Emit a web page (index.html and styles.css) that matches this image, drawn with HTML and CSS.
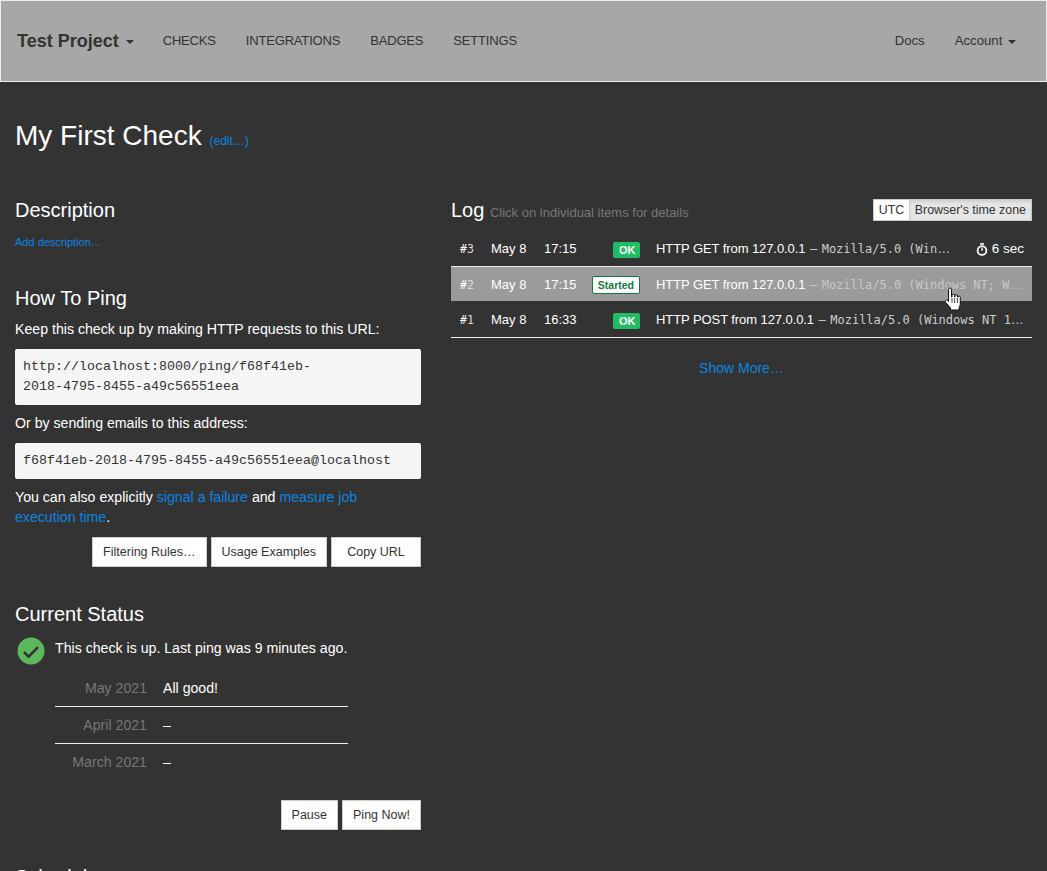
FILE: index.html
```html
<!DOCTYPE html>
<html lang="en">
<head>
<meta charset="utf-8">
<title>My First Check</title>
<link rel="stylesheet" href="styles.css">
</head>
<body>
<nav class="navbar">
  <a class="brand">Test Project <span class="caret"></span></a>
  <ul class="nav-links">
    <li>CHECKS</li>
    <li>INTEGRATIONS</li>
    <li>BADGES</li>
    <li>SETTINGS</li>
  </ul>
  <ul class="nav-links nav-right">
    <li class="plain">Docs</li>
    <li class="plain">Account <span class="caret small"></span></li>
  </ul>
</nav>

<main class="container">
  <h1 class="title">My First Check <small class="edit">(edit…)</small></h1>
  <div class="columns">
    <section class="left">
      <h2 class="first">Description</h2>
      <a class="add-desc">Add description…</a>

      <h2 class="ping-head">How To Ping</h2>
      <p>Keep this check up by making HTTP requests to this URL:</p>
      <pre class="code">http://localhost:8000/ping/f68f41eb-
2018-4795-8455-a49c56551eea</pre>
      <p>Or by sending emails to this address:</p>
      <pre class="code">f68f41eb-2018-4795-8455-a49c56551eea@localhost</pre>
      <p class="explicit">You can also explicitly <a>signal a failure</a> and <a>measure job execution time</a>.</p>
      <div class="buttons">
        <button class="btn">Filtering Rules…</button>
        <button class="btn">Usage Examples</button>
        <button class="btn wide">Copy URL</button>
      </div>

      <h2 class="status-head">Current Status</h2>
      <div class="status">
        <svg class="status-icon" width="28" height="28" viewBox="0 0 28 28" aria-hidden="true">
          <circle cx="14" cy="14" r="13.5" fill="#5cb85c"/>
          <path d="M7 15l4.6 4.6L21 10.2" fill="none" stroke="#333" stroke-width="2.6"/>
        </svg>
        <div class="status-body">
          <p class="status-text">This check is up. Last ping was 9 minutes ago.</p>
          <table class="months">
            <tr><th>May 2021</th><td>All good!</td></tr>
            <tr><th>April 2021</th><td>–</td></tr>
            <tr><th>March 2021</th><td>–</td></tr>
          </table>
        </div>
      </div>
      <div class="buttons actions">
        <button class="btn">Pause</button>
        <button class="btn">Ping Now!</button>
      </div>
      <h2 class="schedule-head">Schedule</h2>
    </section>

    <section class="right">
      <div class="log-head">
        <h2 class="first">Log <small class="hint">Click on individual items for details</small></h2>
        <div class="tz">
          <span class="tz-btn active">UTC</span><span class="tz-btn">Browser's time zone</span>
        </div>
      </div>
      <table class="log">
        <tr>
          <td class="n"><span>#</span>3</td><td class="date">May 8</td><td class="time">17:15</td>
          <td class="badge-cell"><span class="badge ok">OK</span></td>
          <td class="detail">
            <div class="detail-row">
              <div class="ev">HTTP GET from 127.0.0.1 <span class="dash">–</span> <code>Mozilla/5.0 (Win</code><span class="dots">…</span></div>
              <div class="dur">
                <svg width="12" height="13" viewBox="0 0 12 13" aria-hidden="true"><path d="M4 1h4" stroke="#fff" stroke-width="1.6"/><circle cx="6" cy="7.5" r="4.4" fill="none" stroke="#fff" stroke-width="1.7"/><path d="M6 4.6v3.2" stroke="#fff" stroke-width="1.3"/></svg>
                <span class="dur-text">6 sec</span>
              </div>
            </div>
          </td>
        </tr>
        <tr class="hover">
          <td class="n"><span>#</span>2</td><td class="date">May 8</td><td class="time">17:15</td>
          <td class="badge-cell"><span class="badge started">Started</span></td>
          <td class="detail"><div class="ev">HTTP GET from 127.0.0.1 <span class="dash">–</span> <code>Mozilla/5.0 (Windows NT; W</code><span class="dots">…</span></div></td>
        </tr>
        <tr class="last">
          <td class="n"><span>#</span>1</td><td class="date">May 8</td><td class="time">16:33</td>
          <td class="badge-cell"><span class="badge ok">OK</span></td>
          <td class="detail"><div class="ev">HTTP POST from 127.0.0.1 <span class="dash">–</span> <code>Mozilla/5.0 (Windows NT 1</code><span class="dots">…</span></div></td>
        </tr>
      </table>
      <div class="more"><a>Show More…</a></div>
    </section>
  </div>
</main>

<svg class="cursor" width="17" height="25" viewBox="0 0 17 25" aria-hidden="true">
  <path d="M4.5 14.5V2.5a1.5 1.5 0 0 1 3 0V10h.5V8.5a1.3 1.3 0 0 1 2.6 0V10h.4V9a1.3 1.3 0 0 1 2.6 0v1.2h.3a1.2 1.2 0 0 1 2.4.3v5.5c0 2-.6 3-1.2 4.5v2.5H6.5V21L1.8 15.6c-1.4-1.8.5-3.6 2-2.3z" fill="#fff" stroke="#111" stroke-width="1"/>
  <path d="M8 11v5M10.6 11v5M13.4 11v5" stroke="#111" stroke-width=".8"/>
</svg>
</body>
</html>
```

FILE: styles.css
```css
* { box-sizing: border-box; }
html, body { height: 871px; overflow: hidden; }
body {
  margin: 0;
  background: #333;
  color: #fff;
  font-family: "Liberation Sans", Arial, sans-serif;
  font-size: 14.15px;
  line-height: 20px;
  position: relative;
}
a { color: #0b84e0; text-decoration: none; }
p { margin: 0; }

.navbar {
  display: flex;
  align-items: center;
  height: 82px;
  background: #a7a7a7;
  border: 1px solid #eee;
  color: #333;
  padding: 0 15px 0 16px;
}
.brand { color: #333; font-size: 18px; font-weight: bold; margin-right: 14px; }
.caret {
  display: inline-block;
  width: 0; height: 0;
  margin-left: 2px;
  vertical-align: middle;
  border-top: 4px solid #333;
  border-left: 4px solid transparent;
  border-right: 4px solid transparent;
}
.nav-links { display: flex; list-style: none; margin: 0; padding: 0; font-size: 13px; letter-spacing: -.18px; }
.nav-links li { padding: 0 15px; }
.nav-right { margin-left: auto; letter-spacing: 0; font-size: 13.2px; }

.container { padding: 0 15px; }
h1, h2 { font-weight: 400; margin: 0; }
.title { font-size: 28px; line-height: 32px; padding-top: 38px; height: 116px; }
.edit { font-size: 12px; color: #0b84e0; font-weight: 400; }

.columns { display: grid; grid-template-columns: 406px 581px; column-gap: 30px; }
h2 { font-size: 20px; line-height: 24px; }
.add-desc { display: block; font-size: 11px; line-height: 16px; margin-top: 12px; }
.ping-head { margin-top: 36px; margin-bottom: 9px; }

.code {
  background: #f5f5f5;
  color: #333;
  font-family: "Liberation Mono", "Courier New", monospace;
  font-size: 13.33px;
  line-height: 20px;
  margin: 10px 0 8px;
  padding: 8px;
  border-radius: 2px;
  white-space: pre-wrap;
}
.explicit { margin-top: 8px; }
.buttons { display: flex; justify-content: flex-end; gap: 4px; margin-top: 10px; }
.btn {
  background: #fff;
  border: 1px solid #ccc;
  color: #333;
  font-family: inherit;
  font-size: 12.5px;
  line-height: 18px;
  height: 30px;
  padding: 0 10px;
  border-radius: 0;
}
.btn.wide { min-width: 90px; }
.status-head { margin-top: 35px; }
.status { display: flex; margin-top: 8px; }
.status-icon { margin: 3px 10px 0 2px; flex: none; }
.status-body { width: 293px; }
.status-text { margin-top: 4px; }
.months { border-collapse: collapse; width: 100%; margin-top: 11px; }
.months th {
  width: 92px; font-weight: 400; color: #777; text-align: right;
  padding: 8px 0; white-space: nowrap;
}
.months td { padding: 8px 0 8px 16px; }
.months tr:first-child th, .months tr:first-child td { padding-top: 9px; }
.months tr + tr th, .months tr + tr td { border-top: 1px solid #eee; }
.actions { margin-top: 20px; }
.schedule-head { margin-top: 35px; }

.log-head { display: flex; justify-content: space-between; align-items: flex-start; height: 33px; }
.hint { font-size: 13px; color: #777; }
.tz { display: flex; font-size: 12.4px; line-height: 20px; margin-top: 1px; border: 1px solid #ccc; color: #333; height: 22px; }
.tz-btn { padding: 0 5px; background: #e6e6e6; box-shadow: inset 0 2px 3px rgba(0,0,0,.1); }
.tz-btn.active { width: 36px; background: #fff; box-shadow: none; border-right: 1px solid #ccc; }

.log { width: 100%; border-collapse: collapse; table-layout: fixed; border-bottom: 1px solid #eee; font-size: 13px; }
.log td { padding: 2px 0 0; height: 35px; white-space: nowrap; vertical-align: middle; }
.log tr + tr td { border-top: 1px solid transparent; }
.log tr.hover td { background: #9b9b9b; border-top: 1px solid #eee; }
.log tr.last td { height: 36px; }
.n { width: 40px; padding-left: 9px !important; font-family: "DejaVu Sans Mono", monospace; font-size: 11.5px; color: #ddd; }
.n span { color: #fff; }
.date { width: 53px; }
.time { width: 40px; }
.badge-cell { width: 56px; text-align: right; }
.detail { padding-left: 16px !important; padding-right: 8px !important; }
.detail-row { display: flex; justify-content: space-between; }
.ev { overflow: hidden; letter-spacing: -.08px; }
.log code { font-family: "DejaVu Sans Mono", monospace; font-size: 12px; color: #ccc; letter-spacing: 0; }
.dots { color: #ccc; }
.hover code, .hover .dash, .hover .dots { color: #c8c8c8; }
.dash { color: #ccc; margin: 0 1px; }
.dur { display: flex; align-items: center; gap: 4px; }
.dur-text { font-size: 13.5px; }
.badge {
  display: inline-block;
  font-size: 11px;
  font-weight: bold;
  border-radius: 2px;
  vertical-align: middle;
  position: relative;
}
.badge.ok { background: #21bd64; color: #fff; padding: 2px 6px; width: 27px; height: 16px; line-height: 12px; text-align: center; }
.badge.started { background: #fff; color: #117a3c; border: 1px solid #117a3c; padding: 2px 5px; height: 18px; line-height: 12px; font-size: 10.5px; }
.more { text-align: center; margin-top: 20px; font-size: 14px; }

.cursor { position: absolute; left: 944px; top: 287px; }
```
